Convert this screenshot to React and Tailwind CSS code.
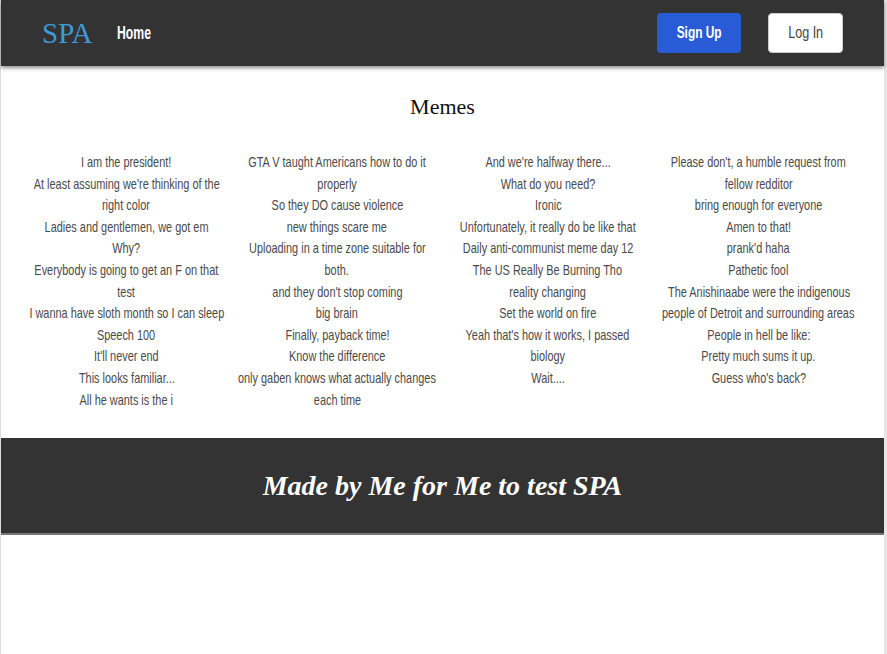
import React from "react";

const SANS = "font-['Liberation_Sans',Arial,sans-serif]";
const SERIF = "font-['Liberation_Serif','Times_New_Roman',serif]";

// Lines are wrapped as in the original column width ("\n" = wrap)
const columns = [
  [
    "I am the president!",
    "At least assuming we're thinking of the\nright color",
    "Ladies and gentlemen, we got em",
    "Why?",
    "Everybody is going to get an F on that\ntest",
    "I wanna have sloth month so I can sleep",
    "Speech 100",
    "It'll never end",
    "This looks familiar...",
    "All he wants is the i",
  ],
  [
    "GTA V taught Americans how to do it\nproperly",
    "So they DO cause violence",
    "new things scare me",
    "Uploading in a time zone suitable for\nboth.",
    "and they don't stop coming",
    "big brain",
    "Finally, payback time!",
    "Know the difference",
    "only gaben knows what actually changes\neach time",
  ],
  [
    "And we're halfway there...",
    "What do you need?",
    "Ironic",
    "Unfortunately, it really do be like that",
    "Daily anti-communist meme day 12",
    "The US Really Be Burning Tho",
    "reality changing",
    "Set the world on fire",
    "Yeah that's how it works, I passed\nbiology",
    "Wait....",
  ],
  [
    "Please don't, a humble request from\nfellow redditor",
    "bring enough for everyone",
    "Amen to that!",
    "prank'd haha",
    "Pathetic fool",
    "The Anishinaabe were the indigenous\npeople of Detroit and surrounding areas",
    "People in hell be like:",
    "Pretty much sums it up.",
    "Guess who's back?",
  ],
];

const Condensed = ({ children, className = "" }) => (
  <span className={`inline-block whitespace-nowrap ${className}`}>{children}</span>
);

const Navbar = () => (
  <nav className="h-[66px] bg-[#333333] flex items-center pl-[41px] pr-[41px] shadow-[0_2px_4px_rgba(0,0,0,0.45)] relative z-10">
    <span className={`${SERIF} text-[29px] text-[#3d9ad8] leading-none`}>SPA</span>
    <a className={`${SANS} ml-[16px] text-white font-bold text-[18px]`}>
      <Condensed className="scale-x-[0.68]">Home</Condensed>
    </a>
    <div className="ml-auto flex items-center gap-[27px]">
      <button className={`${SANS} h-[40px] w-[84px] rounded-[4px] bg-[#2a5bd7] text-white font-bold text-[17px]`}>
        <Condensed className="scale-x-[0.7]">Sign Up</Condensed>
      </button>
      <button className={`${SANS} h-[40px] w-[75px] rounded-[4px] bg-white border border-[#ccc] text-[#444] text-[17px]`}>
        <Condensed className="scale-x-[0.74]">Log In</Condensed>
      </button>
    </div>
  </nav>
);

const MemeColumn = ({ items }) => (
  <ul className="flex flex-col min-w-0">
    {items.map((t) => (
      <li key={t}>
        {t.split("\n").map((line) => (
          <div key={line} className="flex justify-center leading-[21.6px]">
            <Condensed className="shrink-0 scale-x-[0.728]">{line}</Condensed>
          </div>
        ))}
      </li>
    ))}
  </ul>
);

export default function App() {
  return (
    <div className="min-h-[654px] bg-white border-l border-[#dcdcdc] border-r-[3px] border-r-[#e6e6e6]">
      <Navbar />

      {/* ── Memes ─────────────────────────── */}
      <section className="pt-[28px] pb-[28px]">
        <h1 className={`${SERIF} text-center text-[22px] leading-[26px] text-[#111]`}>Memes</h1>
        <div className={`${SANS} grid grid-cols-4 px-[20px] mt-[31px] text-[15px] text-[#4a4a4a]`}>
          {columns.map((c, i) => (
            <MemeColumn key={i} items={c} />
          ))}
        </div>
      </section>

      <footer className="h-[97px] bg-[#333333] flex items-center justify-center border-b-2 border-[#777]">
        <p className={`${SERIF} text-white italic font-bold text-[28px]`}>Made by Me for Me to test SPA</p>
      </footer>
    </div>
  );
}
